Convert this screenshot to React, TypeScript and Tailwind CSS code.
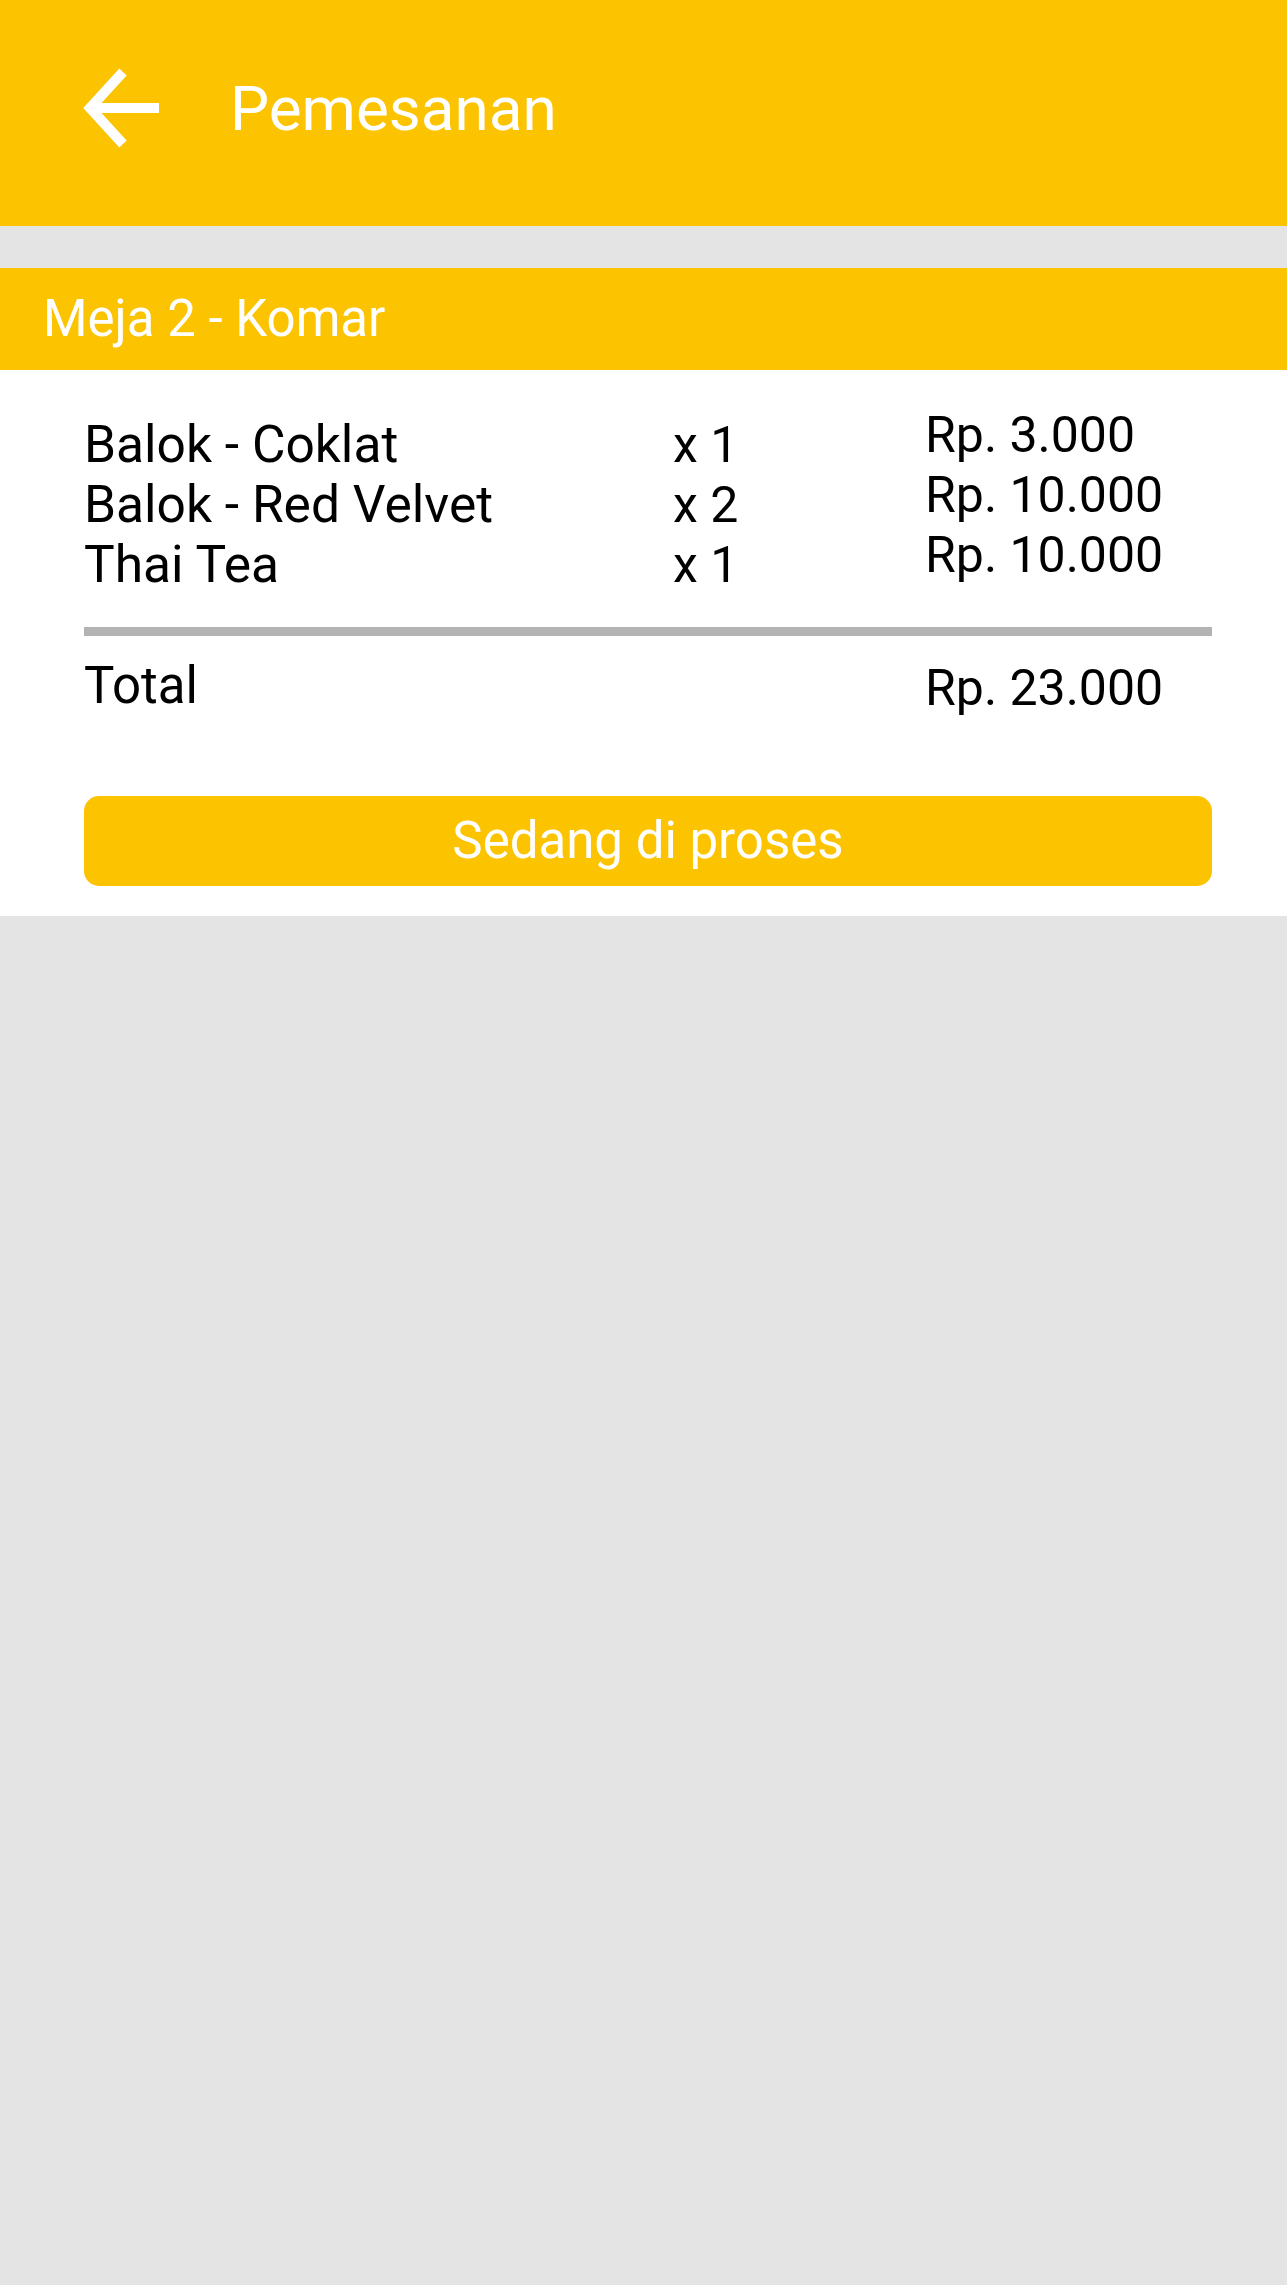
import React from "react";

const items = [
  { name: "Balok - Coklat", qty: 1, price: "Rp. 3.000" },
  { name: "Balok - Red Velvet", qty: 2, price: "Rp. 10.000" },
  { name: "Thai Tea", qty: 1, price: "Rp. 10.000" },
];

const BackArrow = () => (
  <svg width="76" height="80" viewBox="0 0 76 80" fill="none">
    <path d="M8 40 H76" stroke="white" strokeWidth="10" />
    <path d="M40 4 L7 40 L40 76" stroke="white" strokeWidth="10" strokeLinejoin="miter" />
  </svg>
);

export default function App() {
  return (
    <div className="min-h-[2285px] w-full bg-[#e4e4e4] font-['Roboto',sans-serif]">
      {/* toolbar */}
      <div className="h-[226px] bg-[#fcc300] flex items-center pb-[10px]">
        <div className="ml-[83px]">
          <BackArrow />
        </div>
        <h1 className="ml-[71px] text-[62px] text-white font-normal">Pemesanan</h1>
      </div>

      <div className="mt-[42px]">
        <div className="h-[102px] bg-[#fcc300] flex items-center pl-[43px]">
          <span className="text-[51px] text-white">Meja 2 - Komar</span>
        </div>

        <div className="bg-white pl-[84px] pr-[75px] pt-[35px] pb-[30px]">
          <div className="grid grid-cols-[589px_252px_1fr] text-[50px] leading-[60px] text-black">
            <div className="pt-[10px] text-[51.5px]">
              {items.map((it) => (
                <div key={it.name}>{it.name}</div>
              ))}
            </div>
            <div className="pt-[10px]">
              {items.map((it, i) => (
                <div key={i}>x {it.qty}</div>
              ))}
            </div>
            <div>
              {items.map((it, i) => (
                <div key={i}>{it.price}</div>
              ))}
            </div>
          </div>

          <div className="mt-[32px] h-[9px] bg-[#b3b3b3]" />

          <div className="mt-[20px] grid grid-cols-[841px_1fr] text-[50px] leading-[60px] text-black">
            <div className="text-[51px]">Total</div>
            <div className="pt-[2px]">Rp. 23.000</div>
          </div>

          <button className="mt-[78px] w-full h-[90px] rounded-[15px] bg-[#fcc300] text-white text-[51px] leading-[90px] text-center">
            Sedang di proses
          </button>
        </div>
      </div>
    </div>
  );
}
